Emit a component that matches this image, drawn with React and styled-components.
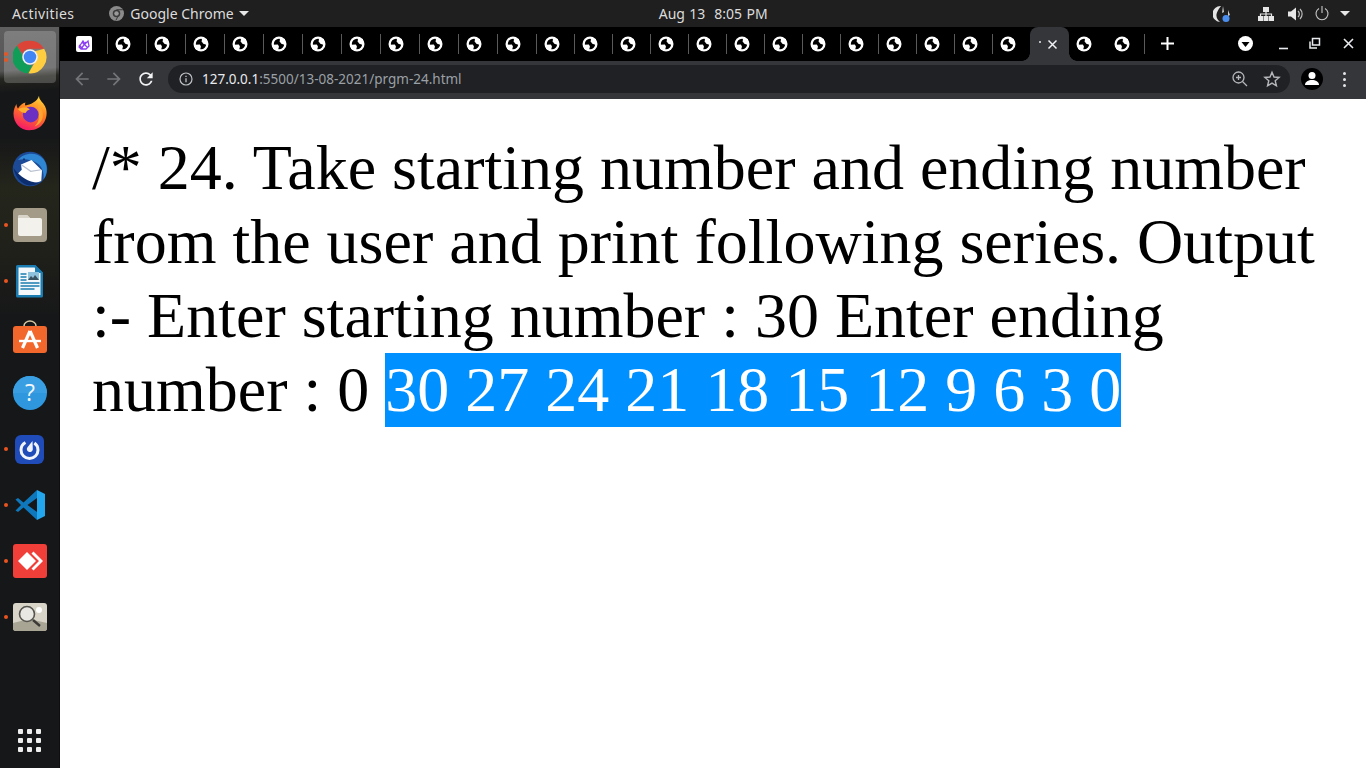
import React from "react";
import styled, { createGlobalStyle } from "styled-components";

const GlobalStyle = createGlobalStyle`
  html, body {
    margin: 0;
    padding: 0;
    height: 100%;
    overflow: hidden;
    background: #fff;
  }
`;

const Screen = styled.div`
  width: 100vw;
  height: 100vh;
  display: flex;
  flex-direction: column;
  overflow: hidden;
`;

const TopBar = styled.header`
  flex: 0 0 27px;
  display: flex;
  align-items: center;
  padding: 0 0 0 12px;
  background: #1f1f1f;
  color: #dcdcdc;
  font-family: "Noto Sans", sans-serif;
  font-size: 14px;
`;

const Activities = styled.span`
  letter-spacing: 0.4px;
`;

const AppMenu = styled.div`
  display: flex;
  align-items: center;
  gap: 6px;
  margin-left: 35px;
`;

const Caret = styled.span`
  display: inline-block;
  width: 0;
  height: 0;
  margin-left: ${(props) => props.$gap || 0}px;
  border-left: 5px solid transparent;
  border-right: 5px solid transparent;
  border-top: 5px solid #e6e6e6;
`;

const Clock = styled.div`
  margin-left: 410px;
  white-space: pre;
  word-spacing: 0.8px;
`;

const Tray = styled.div`
  margin-left: auto;
  display: flex;
  align-items: center;
  padding-right: 16px;
`;

const TrayIcon = styled.svg`
  display: block;
  margin-right: ${(props) => props.$gap || 0}px;
`;

const Desk = styled.div`
  flex: 1;
  display: flex;
  min-height: 0;
`;

const Dock = styled.nav`
  flex: 0 0 60px;
  box-sizing: border-box;
  display: flex;
  flex-direction: column;
  align-items: center;
  padding: 2px 0 0;
  border-right: 1px solid #0e0e0e;
  background:
    linear-gradient(176deg, #5f5f5f 0, #555 44px, #25261f 52px, transparent 66px),
    linear-gradient(180deg, transparent 110px, #24251b 160px, #20211a 220px, transparent 290px),
    #161718;
`;

const DockItem = styled.div`
  position: relative;
  flex: 0 0 56px;
  width: 52px;
  display: flex;
  align-items: center;
  justify-content: center;

  &::before {
    content: "";
    position: absolute;
    inset: 2px 0;
    border-radius: 4px;
    background: ${(props) => (props.$active ? "rgba(255,255,255,0.2)" : "transparent")};
  }

  & > svg {
    position: relative;
  }
`;

const RunDot = styled.i`
  position: absolute;
  left: 0;
  top: ${(props) => props.$top}px;
  width: 4px;
  height: 4px;
  border-radius: 50%;
  background: #e95420;
`;

const GridButton = styled.div`
  margin-top: auto;
  margin-bottom: 16px;
  display: grid;
  grid-template-columns: repeat(3, 5px);
  gap: 4px;
`;

const GridDot = styled.i`
  width: 5px;
  height: 5px;
  border-radius: 1px;
  background: #efefef;
`;

const Browser = styled.main`
  flex: 1;
  min-width: 0;
  display: flex;
  flex-direction: column;
`;

const TabStrip = styled.div`
  flex: 0 0 34px;
  display: flex;
  background: #000;
`;

const TabList = styled.div`
  display: flex;
  margin-left: 9px;
`;

const Tab = styled.div`
  box-sizing: border-box;
  flex: 0 0 ${(props) => props.$w}px;
  height: 20px;
  margin-top: 7px;
  padding: 2px 0 0 7px;
  border-right: 1px solid ${(props) => (props.$plain ? "transparent" : "#5a5a5a")};
`;

const ActiveTab = styled.div`
  position: relative;
  flex: 0 0 39px;
  box-sizing: border-box;
  display: flex;
  align-items: center;
  margin-left: -1px;
  padding: 0 0 0 9px;
  background: #35363a;
  border-radius: 8px 8px 0 0;

  &::before,
  &::after {
    content: "";
    position: absolute;
    bottom: 0;
    width: 8px;
    height: 8px;
  }

  &::before {
    left: -8px;
    background: radial-gradient(circle at 0 0, #000 7.5px, #35363a 8px);
  }

  &::after {
    right: -8px;
    background: radial-gradient(circle at 100% 0, #000 7.5px, #35363a 8px);
  }
`;

const TabSliver = styled.i`
  width: 2px;
  height: 2px;
  margin-right: 6px;
  margin-bottom: 5px;
  background: #bbb;
`;

const StripIcon = styled.svg`
  display: block;
  flex: none;
  margin-left: ${(props) => props.$left || 0}px;
  margin-top: ${(props) => props.$top || 0}px;
`;

const Toolbar = styled.div`
  flex: 0 0 38px;
  box-sizing: border-box;
  display: flex;
  align-items: center;
  padding: 0 0 2px 12px;
  background: #35363a;
`;

const NavButton = styled.div`
  flex: 0 0 20px;
  display: flex;
  justify-content: center;
  margin-right: 12px;
`;

const Omnibox = styled.div`
  flex: 0 0 1122px;
  box-sizing: border-box;
  height: 28px;
  display: flex;
  align-items: center;
  padding: 0 9px 0 11px;
  border-radius: 14px;
  background: #202124;
`;

const Url = styled.div`
  margin-left: 9px;
  font-family: "Noto Sans", sans-serif;
  font-size: 13.5px;
  color: #9aa0a6;
  white-space: pre;
`;

const UrlHost = styled.span`
  color: #e8eaed;
`;

const OmniTools = styled.div`
  margin-left: auto;
  display: flex;
  align-items: center;
  gap: 14px;
`;

const Avatar = styled.div`
  flex: none;
  width: 22px;
  height: 22px;
  margin-left: 11px;
  border-radius: 50%;
  background: #000;
  display: flex;
  align-items: center;
  justify-content: center;
`;

const MenuDots = styled.div`
  margin-left: 20px;
  display: grid;
  gap: 3px;
`;

const MenuDot = styled.i`
  width: 3px;
  height: 3px;
  border-radius: 50%;
  background: #e3e5e8;
`;

const Page = styled.section`
  flex: 1;
  box-sizing: border-box;
  padding: 32px;
  background: #fff;
  color: #000;
  font-family: "Liberation Serif", serif;
  font-size: 64px;
`;

const Picked = styled.span`
  display: inline-block;
  background: #0090ff;
  color: #fff;
`;

const Globe = () => (
  <svg width="16" height="16" viewBox="0 0 16 16">
    <circle cx="8" cy="8" r="7.5" fill="#fff" />
    <circle cx="8" cy="8" r="5.2" fill="#000" />
    <path d="M9 2.400L14 3V9L10.300 7.700 8.700 5.500Z" fill="#fff" />
    <path d="M2 8.800L6.800 8.400 8 10.600 7 14 2 13Z" fill="#fff" />
  </svg>
);

const ChromeMono = () => (
  <StripIcon width="15" height="15" viewBox="0 0 24 24">
    <circle cx="12" cy="12" r="12" fill="#8b8b8b" />
    <circle cx="12" cy="12" r="6" fill="#3a3a3a" />
    <circle cx="12" cy="12" r="3.600" fill="#9a9a9a" />
    <path d="M12 6h10M15 15l-4 8" stroke="#3a3a3a" strokeWidth="1.600" />
  </StripIcon>
);

const ChromeIcon = () => (
  <svg width="34" height="34" viewBox="0 0 48 48">
    <path d="M24 1a23 23 0 0 1 20 11.500H24a11.500 11.500 0 0 0-10.600 7L5.500 8A23 23 0 0 1 24 1z" fill="#db4437" />
    <path d="M5.500 8l10 17.300a9 9 0 0 0 11.500 10L21.800 47A23 23 0 0 1 5.500 8z" fill="#0f9d58" />
    <path d="M44 12.500A23 23 0 0 1 21.800 47l11-19.200A11 11 0 0 0 31 16z" fill="#ffcd40" />
    <circle cx="24" cy="24" r="11" fill="#f1f1f1" />
    <circle cx="24" cy="24" r="8.800" fill="#4285f4" />
  </svg>
);

const FirefoxIcon = () => (
  <svg width="36" height="36" viewBox="0 0 48 48">
    <defs>
      <linearGradient id="ffx" x1="0.7" y1="0" x2="0.3" y2="1">
        <stop offset="0" stopColor="#ffd43a" />
        <stop offset="0.45" stopColor="#ff7a1f" />
        <stop offset="1" stopColor="#f5156c" />
      </linearGradient>
    </defs>
    <path d="M36 1c0 6 5 8 8 14 3 6 3 14-1 21-4 7-11 11-20 11C11 47 2 37 2 25c0-5 2-10 4-13 0 3 1 5 2 6 2-4 6-7 10-8-1 2-1 3 0 4 6-1 16-5 18-13z" fill="url(#ffx)" />
    <circle cx="25" cy="26" r="10.500" fill="#6b2fc4" />
    <path d="M8 19c5-3 12-3 16 0-3 1-5 3-6 5-4 0-7-2-10-5z" fill="#ffb02e" />
    <path d="M33 11c5 4 9 10 8 18-1 6-5 11-11 13 4-4 6-8 6-13 0-7-1-12-3-18z" fill="#ffa42e" />
  </svg>
);

const ThunderbirdIcon = () => (
  <svg width="36" height="36" viewBox="0 0 48 48">
    <circle cx="24" cy="24" r="23" fill="#1c4a96" />
    <path d="M8 12C15 2 33 0 42 11c6 8 6 19 0 27 1-8-1-17-9-22-8-5-17-6-25-4z" fill="#2f86d2" />
    <path d="M12 18l14-6 14 14-1 14-8 3-14-4-9-9 5-5z" fill="#fff" />
    <path d="M12 18l13 9 14-2" fill="none" stroke="#b9c0cf" strokeWidth="1.600" />
    <path d="M2 23c2 11 11 22 22 23 5 0 9-1 12-4-12 1-25-7-34-19z" fill="#0d2e6e" />
    <circle cx="16" cy="11" r="1.200" fill="#0d2e6e" />
  </svg>
);

const FilesIcon = () => (
  <svg width="34" height="34" viewBox="0 0 34 34">
    <rect width="34" height="34" rx="4" fill="#a39b87" />
    <path d="M5 9a2 2 0 0 1 2-2h7l3 3h10a2 2 0 0 1 2 2v14a2 2 0 0 1-2 2H7a2 2 0 0 1-2-2z" fill="#f3f1ec" />
    <path d="M5 9a2 2 0 0 1 2-2h7l3 3H5z" fill="#d8d4ca" />
  </svg>
);

const WriterIcon = () => (
  <svg width="28" height="34" viewBox="0 0 28 34">
    <path d="M1.500 1h18l7.500 7.500V32a1.500 1.500 0 0 1-1.500 1.500h-24A1.500 1.500 0 0 1 0 32V2.500A1.500 1.500 0 0 1 1.500 1z" fill="#1a7cb0" />
    <path d="M2.500 3.500h16l6 6V31h-22z" fill="#f4f8fb" />
    <path d="M19 1l8 8h-8z" fill="#1a7cb0" />
    <rect x="12" y="8" width="11" height="8" fill="#8ec1dc" />
    <path d="M12 16l3-4 2 2 2-3 4 5z" fill="#39505f" />
    <path d="M4.500 10h6M4.500 13h6M4.500 16h6M4.500 19h19M4.500 22h19M4.500 25h14" stroke="#1a7cb0" strokeWidth="1.500" />
  </svg>
);

const SoftwareIcon = () => (
  <svg width="34" height="34" viewBox="0 0 34 34">
    <path d="M11 8V6a6 5 0 0 1 12 0v2" fill="none" stroke="#d9c9a3" strokeWidth="1.500" />
    <rect y="6" width="34" height="27" rx="3" fill="#f2672c" />
    <path d="M17 11l-7.500 17M17 11l7.500 17" stroke="#fff" strokeWidth="3.200" />
    <path d="M6 21h22" stroke="#fff" strokeWidth="2.400" />
  </svg>
);

const HelpIcon = () => (
  <svg width="34" height="34" viewBox="0 0 34 34">
    <circle cx="17" cy="17" r="17" fill="#2f97dd" />
    <path d="M0 17a17 17 0 0 1 34 0z" fill="#3a9fe2" />
    <text x="17" y="25" textAnchor="middle" fontFamily="Open Sans, sans-serif" fontSize="23" fill="#f2f7fb">?</text>
  </svg>
);

const MattermostIcon = () => (
  <svg width="29" height="29" viewBox="0 0 29 29">
    <rect width="29" height="29" rx="6" fill="#1f4cb8" />
    <circle cx="14.500" cy="15" r="8.500" fill="none" stroke="#f1f4fb" strokeWidth="3" strokeDasharray="44 9.400" strokeDashoffset="-45" />
    <path d="M17.500 6l.3 8.500a3 3 0 1 1-5.300-2.300z" fill="#f1f4fb" />
  </svg>
);

const VsCodeIcon = () => (
  <svg width="32" height="32" viewBox="0 0 32 32">
    <path d="M23 1L9.500 13.500 4 9l-2.500 1.500L7 16l-5.500 5.500L4 23l5.500-4.500L23 31v-8l-9.500-7L23 9z" fill="#0f77bb" />
    <path d="M23 1l8 4v22l-8 4z" fill="#22a6ee" />
  </svg>
);

const AnyDeskIcon = () => (
  <svg width="34" height="34" viewBox="0 0 34 34">
    <rect width="34" height="34" rx="3" fill="#ef3f38" />
    <path d="M14 8l9 9-9 9-9-9z" fill="#fff" />
    <path d="M20.500 7.500L30 17l-9.500 9.500-2-2L26 17l-7.500-7.500z" fill="#fff" />
  </svg>
);

const MagnifierIcon = () => (
  <svg width="34" height="28" viewBox="0 0 34 28">
    <rect width="34" height="28" rx="3" fill="#d8d5c8" />
    <path d="M0 20l16-4 18 4v5a3 3 0 0 1-3 3H3a3 3 0 0 1-3-3z" fill="#a9a595" />
    <circle cx="26" cy="7" r="3" fill="#fff" />
    <circle cx="14" cy="11" r="7.500" fill="#e9e8e2" stroke="#55544e" strokeWidth="1.600" />
    <path d="M20 17l7 6" stroke="#3b3a36" strokeWidth="2.400" />
  </svg>
);

const TAB_WIDTHS = [...Array(11).fill(39), ...Array(13).fill(38)];

const DOCK = [
  { Icon: ChromeIcon, active: true, dots: [23, 29] },
  { Icon: FirefoxIcon },
  { Icon: ThunderbirdIcon },
  { Icon: FilesIcon, dots: [26] },
  { Icon: WriterIcon, dots: [26] },
  { Icon: SoftwareIcon },
  { Icon: HelpIcon },
  { Icon: MattermostIcon, dots: [26] },
  { Icon: VsCodeIcon, dots: [26] },
  { Icon: AnyDeskIcon, dots: [26] },
  { Icon: MagnifierIcon, dots: [26] },
];

export default function App() {
  return (
    <Screen>
      <GlobalStyle />
      <TopBar>
        <Activities>Activities</Activities>
        <AppMenu>
          <ChromeMono />
          <span>Google Chrome</span>
          <Caret $gap={-1} />
        </AppMenu>
        <Clock>Aug 13  8:05 PM</Clock>
        <Tray>
          <TrayIcon $gap={27} width="18" height="18" viewBox="0 0 18 18">
            <path d="M8 1a8 8 0 0 0-1 16c-3-2-4.500-6-3-9.500C5 5 6.500 3 8 1z" fill="#e4e4e4" />
            <path d="M10 1l1 6-2 1z M15 5l2 5-2 1z" fill="#cfcfcf" />
            <circle cx="13" cy="13.500" r="3.500" fill="#4a8ff0" />
          </TrayIcon>
          <TrayIcon $gap={14} width="16" height="14" viewBox="0 0 16 14">
            <path d="M5 0h6v5H5zM0 9h5v5H0zM5.500 9h5v5h-5zM11 9h5v5h-5z" fill="#e6e6e6" />
            <path d="M8 5v4M2.500 9V7h11v2" fill="none" stroke="#e6e6e6" strokeWidth="1.200" />
          </TrayIcon>
          <TrayIcon $gap={12} width="15" height="14" viewBox="0 0 15 14">
            <path d="M0 4.500h3L8 .5v13l-5-4H0z" fill="#e6e6e6" />
            <path d="M10 4a4 4 0 0 1 0 6M12 2a7 7 0 0 1 0 10" fill="none" stroke="#bdbdbd" strokeWidth="1.200" />
          </TrayIcon>
          <TrayIcon $gap={11} width="14" height="15" viewBox="0 0 14 15">
            <path d="M4 2.500a6 6 0 1 0 6 0" fill="none" stroke="#c8c8c8" strokeWidth="1.100" />
            <path d="M7 0v7" stroke="#c8c8c8" strokeWidth="1.100" />
          </TrayIcon>
          <Caret />
        </Tray>
      </TopBar>
      <Desk>
        <Dock>
          {DOCK.map(({ Icon, active, dots }, i) => (
            <DockItem key={i} $active={active}>
              {(dots || []).map((top) => (
                <RunDot key={top} $top={top} />
              ))}
              <Icon />
            </DockItem>
          ))}
          <GridButton>
            {Array.from({ length: 9 }, (_, i) => (
              <GridDot key={i} />
            ))}
          </GridButton>
        </Dock>
        <Browser>
          <TabStrip>
            <TabList>
              <Tab $w={39}>
                <svg width="16" height="16" viewBox="0 0 16 16">
                  <rect width="16" height="16" rx="2" fill="#fff" />
                  <path d="M3 11l4-6 2 3 3-3 1 5-3 3H5z M3 9l4 4M6 6l6 6M10 6L5 13" fill="none" stroke="#8b3ff0" strokeWidth="1.300" />
                </svg>
              </Tab>
              {TAB_WIDTHS.map((w, i) => (
                <Tab key={i} $w={w}>
                  <Globe />
                </Tab>
              ))}
              <ActiveTab>
                <TabSliver />
                <svg width="11" height="11" viewBox="0 0 11 11">
                  <path d="M1.500 1.500l8 8M9.500 1.500l-8 8" stroke="#f1f3f4" strokeWidth="1.500" />
                </svg>
              </ActiveTab>
              <Tab $w={38} $plain>
                <Globe />
              </Tab>
              <Tab $w={38}>
                <Globe />
              </Tab>
            </TabList>
            <StripIcon $left={16} $top={10} width="13" height="13" viewBox="0 0 13 13">
              <path d="M6.500 0v13M0 6.500h13" stroke="#fff" strokeWidth="2" />
            </StripIcon>
            <StripIcon $left={64} $top={9} width="15" height="15" viewBox="0 0 15 15">
              <circle cx="7.500" cy="7.500" r="7.500" fill="#fff" />
              <path d="M3.500 6h8l-4 5z" fill="#000" />
            </StripIcon>
            <StripIcon $left={24} $top={10} width="13" height="13" viewBox="0 0 13 13">
              <path d="M2 11.500h9" stroke="#e8eaed" strokeWidth="1.600" />
            </StripIcon>
            <StripIcon $left={18} $top={10} width="13" height="13" viewBox="0 0 13 13">
              <path d="M4.500 1.500h7v6.500h-7z M2 4.500v6.500h7" fill="none" stroke="#e8eaed" strokeWidth="1.500" />
            </StripIcon>
            <StripIcon $left={21} $top={10} width="13" height="13" viewBox="0 0 13 13">
              <path d="M2 2l9 9M11 2l-9 9" stroke="#e8eaed" strokeWidth="1.600" />
            </StripIcon>
          </TabStrip>
          <Toolbar>
            <NavButton>
              <svg width="20" height="20" viewBox="0 0 24 24">
                <path d="M20 11H7.830l5.590-5.590L12 4l-8 8 8 8 1.410-1.410L7.830 13H20v-2z" fill="#737578" />
              </svg>
            </NavButton>
            <NavButton>
              <svg width="20" height="20" viewBox="0 0 24 24">
                <path d="M4 11h12.170l-5.590-5.590L12 4l8 8-8 8-1.410-1.410L16.170 13H4v-2z" fill="#737578" />
              </svg>
            </NavButton>
            <NavButton>
              <svg width="20" height="20" viewBox="0 0 24 24">
                <path d="M17.650 6.350C16.200 4.900 14.210 4 12 4c-4.420 0-7.990 3.580-7.990 8s3.570 8 7.990 8c3.730 0 6.840-2.550 7.730-6h-2.080c-.82 2.330-3.040 4-5.650 4-3.310 0-6-2.690-6-6s2.690-6 6-6c1.660 0 3.140.690 4.220 1.780L13 11h7V4l-2.350 2.350z" fill="#f1f3f4" />
              </svg>
            </NavButton>
            <Omnibox>
              <svg width="14" height="14" viewBox="0 0 14 14">
                <circle cx="7" cy="7" r="6" fill="none" stroke="#bdc1c6" strokeWidth="1.200" />
                <path d="M7 6.200v4M7 3.800v1.200" stroke="#bdc1c6" strokeWidth="1.300" />
              </svg>
              <Url>
                <UrlHost>127.0.0.1</UrlHost>:5500/13-08-2021/prgm-24.html
              </Url>
              <OmniTools>
                <svg width="18" height="18" viewBox="0 0 18 18">
                  <circle cx="7.500" cy="7.500" r="5.500" fill="none" stroke="#b4b7bb" strokeWidth="1.300" />
                  <path d="M11.500 11.500l4.500 4.500M7.500 5v5M5 7.500h5" stroke="#b4b7bb" strokeWidth="1.300" />
                </svg>
                <svg width="18" height="18" viewBox="0 0 24 24">
                  <path d="M12 3l2.700 6.300 6.800.6-5.200 4.500 1.600 6.700L12 17.500 6.100 21l1.600-6.700L2.500 9.900l6.800-.6z" fill="none" stroke="#b4b7bb" strokeWidth="1.900" />
                </svg>
              </OmniTools>
            </Omnibox>
            <Avatar>
              <svg width="16" height="16" viewBox="0 0 16 16">
                <circle cx="8" cy="4.500" r="3.500" fill="#fff" />
                <path d="M1 14c0-3.500 3.500-5 7-5s7 1.500 7 5z" fill="#fff" />
              </svg>
            </Avatar>
            <MenuDots>
              <MenuDot />
              <MenuDot />
              <MenuDot />
            </MenuDots>
          </Toolbar>
          <Page>
            /* 24. Take starting number and ending number from the user and print following series. Output :- Enter starting number : 30 Enter ending number : 0{" "}
            <Picked>30 27 24 21 18 15 12 9 6 3 0</Picked>
          </Page>
        </Browser>
      </Desk>
    </Screen>
  );
}
